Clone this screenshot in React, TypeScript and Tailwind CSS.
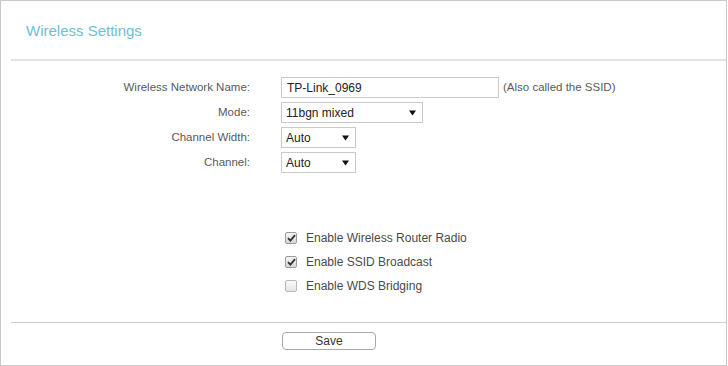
import React from "react";

function Arrow() {
  return (
    <svg width="7" height="6" viewBox="0 0 7 6" className="shrink-0">
      <path d="M0 0.5 L7 0.5 L3.5 5.5 Z" fill="#111" />
    </svg>
  );
}

function Select({ value, width }: { value: string; width: string }) {
  return (
    <div
      className={`${width} h-[21px] border border-[#c9c9c9] bg-white flex items-center justify-between pl-[4px] pr-[6px] text-[12px] text-[#222]`}
    >
      <span>{value}</span>
      <Arrow />
    </div>
  );
}

function Row({ label, children }: { label: string; children: React.ReactNode }) {
  return (
    <div className="flex items-center h-[21px]">
      <div className="w-[249px] text-right text-[11.5px] text-[#5a5a5a]">{label}</div>
      <div className="ml-[31px] flex items-center">{children}</div>
    </div>
  );
}

function Check({ checked, label }: { checked: boolean; label: string }) {
  return (
    <div className="flex items-center h-[24px] pl-[284px]">
      <div
        className={`w-[12px] h-[12px] rounded-[2px] border flex items-center justify-center ${
          checked
            ? "border-[#9a9a9a] bg-gradient-to-b from-[#f4f4f4] to-[#d6d6d6]"
            : "border-[#b8b8b8] bg-gradient-to-b from-[#fafafa] to-[#e4e4e4]"
        }`}
      >
        {checked && (
          <svg width="9" height="8" viewBox="0 0 9 8">
            <path d="M1 4.2 L3.4 6.6 L8 1.2" stroke="#333" strokeWidth="1.8" fill="none" />
          </svg>
        )}
      </div>
      <span className="ml-[9px] text-[12px] text-[#4a4a4a]">{label}</span>
    </div>
  );
}

export default function App() {
  return (
    <div
      className="w-[727px] h-[366px] border border-[#c8c8c8] bg-white flex flex-col"
      style={{ fontFamily: '"Liberation Sans", Arial, sans-serif' }}
    >
      <div className="h-[58px] pl-[25px] pt-[2px] flex items-center text-[15px] text-[#6cc0d4]">
        Wireless Settings
      </div>
      <div className="ml-[10px] h-[2px] bg-[#e3e3e3]" />
      <div className="pt-[16px] flex flex-col gap-[4px]">
        <Row label="Wireless Network Name:">
          <div className="w-[218px] h-[21px] border border-[#c9c9c9] flex items-center pl-[5px] text-[12px] text-[#222]">
            TP-Link_0969
          </div>
          <span className="ml-[4px] text-[11.5px] text-[#5a5a5a]">(Also called the SSID)</span>
        </Row>
        <Row label="Mode:">
          <Select value="11bgn mixed" width="w-[142px]" />
        </Row>
        <Row label="Channel Width:">
          <Select value="Auto" width="w-[75px]" />
        </Row>
        <Row label="Channel:">
          <Select value="Auto" width="w-[75px]" />
        </Row>
      </div>
      <div className="mt-[53px] flex flex-col">
        <Check checked label="Enable Wireless Router Radio" />
        <Check checked label="Enable SSID Broadcast" />
        <Check checked={false} label="Enable WDS Bridging" />
      </div>
      <div className="mt-[24px] ml-[10px] h-[1px] bg-[#cfcfcf]" />
      <div className="mt-[9px] pl-[281px]">
        <button className="w-[94px] h-[18px] rounded-[4px] border border-[#a8a8a8] bg-white text-[12px] text-[#333] flex items-center justify-center">
          Save
        </button>
      </div>
    </div>
  );
}
